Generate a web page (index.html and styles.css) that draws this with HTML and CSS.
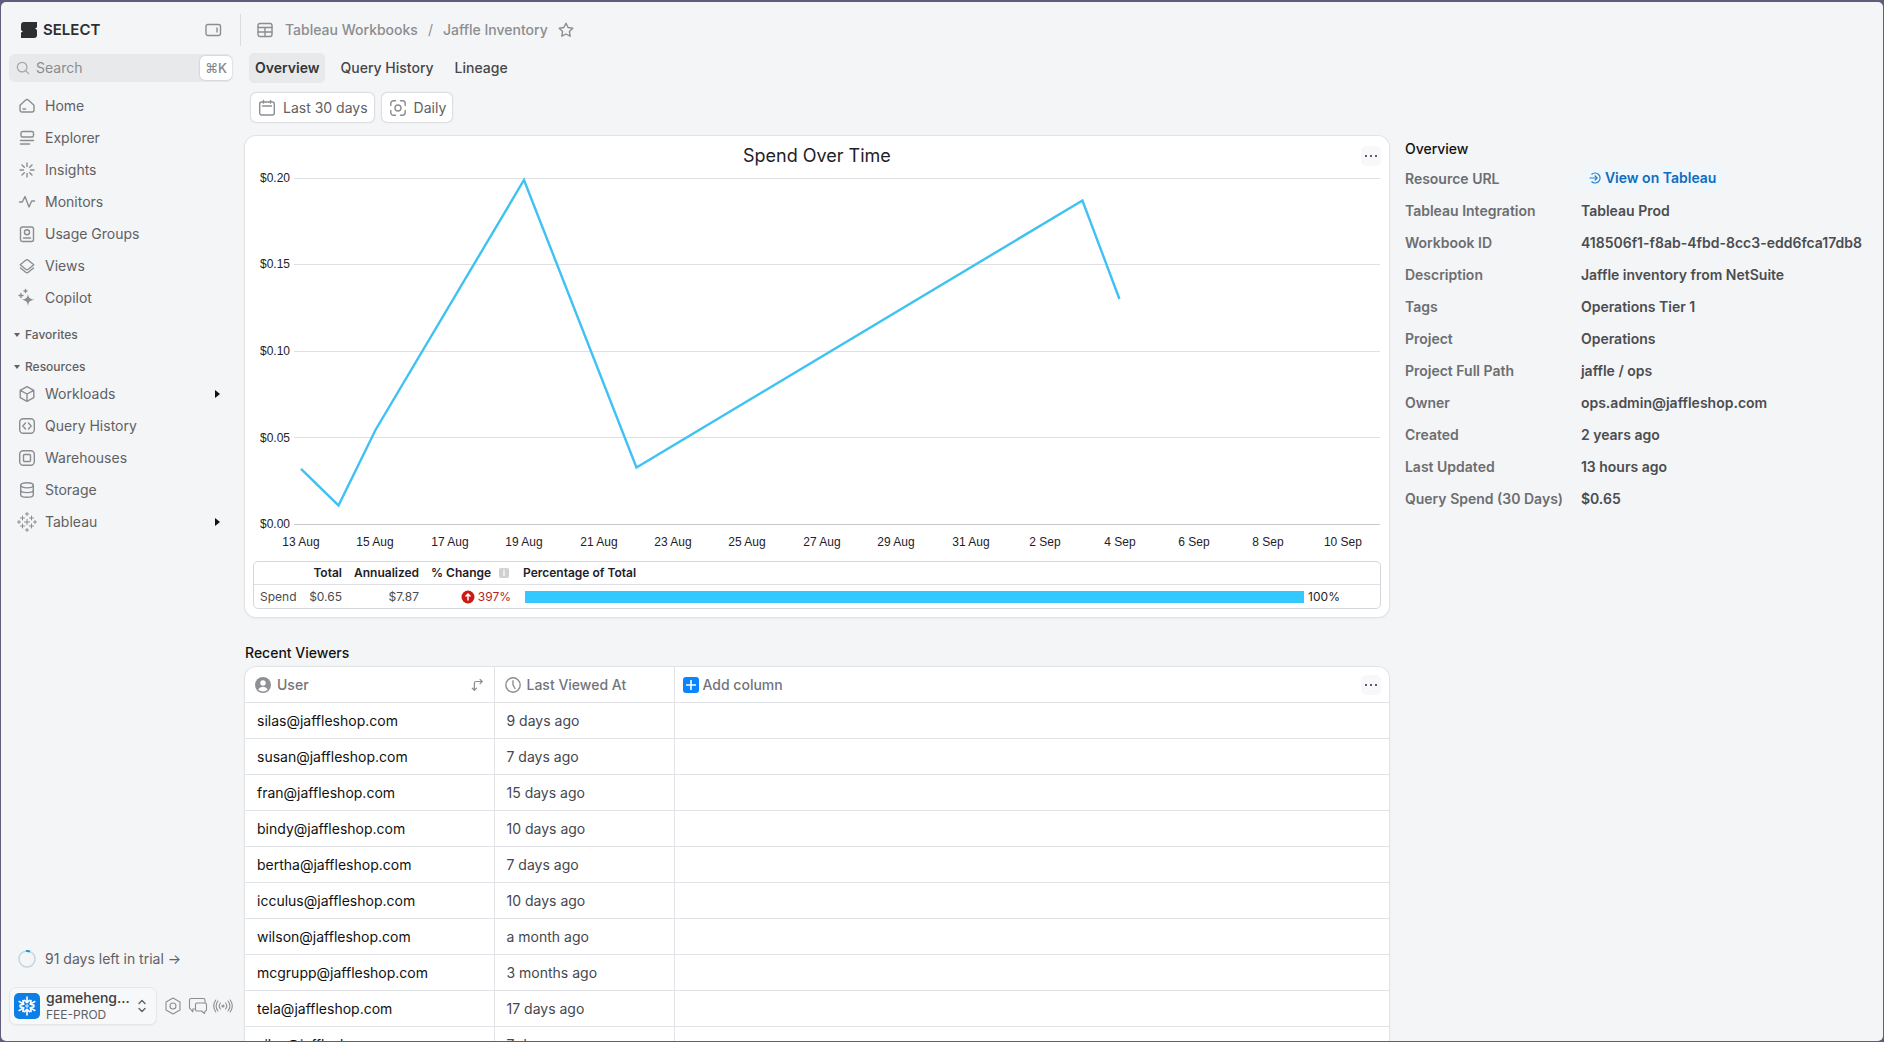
FILE: index.html
```html
<!DOCTYPE html>
<html lang="en">
<head>
    <meta charset="UTF-8">
    <meta name="viewport" content="width=device-width, initial-scale=1.0">
    <title>Jaffle Inventory - SELECT</title>
    <link rel="stylesheet" href="styles.css">
</head>
<body>
    <div class="window">
        <aside class="sidebar">
            <div class="brand">
                <svg class="brand-logo" viewBox="0 0 16 16"><path d="M3 0h13v4.500c0 1-.5 1.500-2 2 1.500.5 2 1.500 2 2.500v4a3 3 0 0 1-3 3H0v-4.500c0-1 .5-1.500 2-2-1.500-.5-2-1.500-2-2.500V3a3 3 0 0 1 3-3z" fill="#2e2f31"/></svg>
                <span class="brand-name">SELECT</span>
                <button class="icon-btn" aria-label="Collapse sidebar">
                    <svg class="icon" viewBox="0 0 16 16"><rect x="1" y="2.500" width="14.500" height="11" rx="2"/><path d="M12 6v4"/></svg>
                </button>
            </div>

            <div class="search">
                <svg class="icon" viewBox="0 0 16 16"><circle cx="7" cy="7" r="5.500"/><path d="M11 11l3.500 3.500"/></svg>
                <input type="text" placeholder="Search" aria-label="Search">
                <kbd>⌘K</kbd>
            </div>

            <nav class="nav">
                <a href="#"><svg class="icon" viewBox="0 0 16 16"><path d="M1 7.200 6.700 2a2 2 0 0 1 2.600 0L15 7.200V12a2 2 0 0 1-2 2H3a2 2 0 0 1-2-2zM4 11h2.500"/></svg>Home</a>
                <a href="#"><svg class="icon" viewBox="0 0 16 16"><rect x="2" y="1.500" width="12.500" height="5.500" rx="1.500"/><path d="M1.500 10.500h13M1.500 14h9"/></svg>Explorer</a>
                <a href="#"><svg class="icon" viewBox="0 0 16 16"><path d="M8 1v3.500M8 11.500V15M1 8h3.500M11.500 8H15M3 3l2.300 2.300M10.700 10.700 13 13M3 13l2.300-2.300M10.700 5.300 13 3"/></svg>Insights</a>
                <a href="#"><svg class="icon" viewBox="0 0 16 16"><path d="M.5 8h2.800L6 2.500l4 10.500L12.700 7h2.800"/></svg>Monitors</a>
                <a href="#"><svg class="icon" viewBox="0 0 16 16"><rect x="1.500" y="1" width="13" height="14.500" rx="2"/><circle cx="8" cy="6.300" r="2.500"/><path d="M4.500 12h7"/></svg>Usage Groups</a>
                <a href="#"><svg class="icon" viewBox="0 0 16 16"><path d="M1.200 6.800 6.700 2.300a2 2 0 0 1 2.600 0l5.500 4.500-5.500 4.500a2 2 0 0 1-2.600 0zM1.500 10l5.200 4.200a2 2 0 0 0 2.600 0l5.200-4.200"/></svg>Views</a>
                <a href="#"><svg class="icon" viewBox="0 0 16 16"><path class="solid" d="M9 4c.7 3.800 1.500 4.900 6.500 5.700-5 .8-5.800 1.900-6.500 6.300-.7-4.400-1.500-5.500-6.500-6.300C7.500 8.900 8.300 7.800 9 4z"/><path d="M2 3.500v4M0 5.500h4M6.500-.5v3M5 1h3"/></svg>Copilot</a>
            </nav>

            <div class="nav-group">Favorites</div>
            <div class="nav-group">Resources</div>

            <nav class="nav">
                <a href="#"><svg class="icon" viewBox="0 0 16 16"><path d="M8 .7 14.800 4.300v7.400L8 15.300 1.200 11.700V4.300zM1.200 4.300 8 8l6.800-3.700M8 8v7.300"/></svg>Workloads<span class="expand"></span></a>
                <a href="#"><svg class="icon" viewBox="0 0 16 16"><rect x=".7" y=".7" width="14.600" height="14.600" rx="3.500"/><path d="M6.500 5 3.800 8l2.700 3M9.500 5l2.700 3-2.700 3"/></svg>Query History</a>
                <a href="#"><svg class="icon" viewBox="0 0 16 16"><rect x=".7" y=".7" width="14.600" height="14.600" rx="3.500"/><rect x="4.500" y="4.500" width="7" height="7" rx="1"/></svg>Warehouses</a>
                <a href="#"><svg class="icon" viewBox="0 0 16 16"><ellipse cx="8" cy="3.300" rx="6.300" ry="2.600"/><path d="M1.700 3.300v9.400c0 1.500 2.800 2.600 6.300 2.600s6.300-1.100 6.300-2.600V3.300M1.700 8c0 1.500 2.800 2.600 6.300 2.600s6.300-1.100 6.300-2.600"/></svg>Storage</a>
                <a href="#"><svg class="icon thin" viewBox="0 0 16 16"><path d="M8 5.500v5M5.500 8h5M3.500 2v4M1.500 4h4M12.500 2v4M10.500 4h4M3.500 10v4M1.500 12h4M12.500 10v4M10.500 12h4M8-1.500v3M6.500 0h3M8 14.500v3M6.500 16h3M0 6.500v3M-1.500 8h3M16 6.500v3M14.500 8h3"/></svg>Tableau<span class="expand"></span></a>
            </nav>

            <div class="sidebar-bottom">
                <a class="trial" href="#">
                    <svg class="ring" viewBox="0 0 18 18"><circle cx="9" cy="9" r="8" stroke="#c3d3e0"/><path d="M8 1a8 8 0 0 1 4 .6" stroke="#1a9be0" stroke-width="2"/></svg>
                    91 days left in trial →
                </a>
                <div class="account-bar">
                    <button class="account">
                        <svg class="account-logo" viewBox="0 0 26 26"><rect width="26" height="26" rx="5" fill="#0b7fe6"/><path d="M13 4v5.500M10.500 7.300 13 9.700l2.500-2.400M13 22v-5.500M10.500 18.700l2.500-2.400 2.500 2.400M5.200 8.500l4.500 2.600M6 12.200l3.700-1.100-.8-3.600M20.800 8.500l-4.500 2.600M20 12.200l-3.700-1.100.8-3.600M5.200 17.500l4.500-2.600M6 13.800l3.700 1.100-.8 3.600M20.800 17.500l-4.500-2.600M20 13.800l-3.700 1.100.8 3.600" fill="none" stroke="#fff" stroke-width="1.600" stroke-linecap="round"/><circle cx="13" cy="13" r="1.200" fill="none" stroke="#fff"/></svg>
                        <span class="account-text">
                            <span class="account-name">gameheng...</span>
                            <span class="account-env">FEE-PROD</span>
                        </span>
                        <svg class="icon dark" viewBox="0 0 16 16"><path d="M5 5.500 8 2.500l3 3M5 10.500l3 3 3-3"/></svg>
                    </button>
                    <button class="icon-btn" aria-label="Settings"><svg class="icon large" viewBox="0 0 18 18"><path d="M9 1 16 5v8l-7 4-7-4V5z"/><circle cx="9" cy="9" r="3"/></svg></button>
                    <button class="icon-btn" aria-label="Feedback"><svg class="icon large" viewBox="0 0 18 18"><path d="M5.500 12H3.800v2.800L1.500 12A1.500 1.500 0 0 1 .5 10.500V3A1.500 1.500 0 0 1 2 1.500h12.500A1.500 1.500 0 0 1 16 3v2M8 6h8a1.500 1.500 0 0 1 1.500 1.500v5A1.500 1.500 0 0 1 16 14l-.500 2.500L12.500 14H8a1.500 1.500 0 0 1-1.500-1.500v-5A1.500 1.500 0 0 1 8 6z"/></svg></button>
                    <button class="icon-btn" aria-label="Status"><svg class="icon large" viewBox="0 0 18 18"><circle cx="9" cy="9" r="1"/><path d="M6.500 6a4.500 4.500 0 0 0 0 6M4 4a7.500 7.500 0 0 0 0 10M1.800 3a10.500 10.500 0 0 0 0 12M11.500 6a4.500 4.500 0 0 1 0 6M14 4a7.500 7.500 0 0 1 0 10M16.200 3a10.500 10.500 0 0 1 0 12"/></svg></button>
                </div>
            </div>
        </aside>

        <main class="main">
            <header class="topbar">
                <svg class="icon" viewBox="0 0 16 16"><rect x="1" y="1.500" width="14" height="13" rx="2"/><path d="M1 5.500h14M1 10h14M8 5.500v9"/></svg>
                <a href="#">Tableau Workbooks</a>
                <span class="slash">/</span>
                <a href="#">Jaffle Inventory</a>
                <button class="icon-btn" aria-label="Add to favorites"><svg class="icon" viewBox="0 0 16 16"><path d="M8 1.200l2.100 4.300 4.700.7-3.400 3.300.8 4.700L8 12l-4.200 2.200.8-4.700L1.200 6.200l4.700-.7z"/></svg></button>
            </header>

            <nav class="tabs">
                <a class="tab active" href="#">Overview</a>
                <a class="tab" href="#">Query History</a>
                <a class="tab" href="#">Lineage</a>
            </nav>

            <div class="filters">
                <button class="filter"><svg class="icon" viewBox="0 0 16 16"><rect x=".7" y="2" width="14.600" height="13" rx="2"/><path d="M4.500.5V3M11.500.5V3M3.500 6h9"/></svg>Last 30 days</button>
                <button class="filter"><svg class="icon" viewBox="0 0 16 16"><circle cx="8" cy="8" r="3"/><path d="M.8 5.500V3.500A2.700 2.700 0 0 1 3.500.8h2M10.500.8h2a2.700 2.700 0 0 1 2.700 2.700v2M15.200 10.500v2a2.700 2.700 0 0 1-2.700 2.700h-2M5.500 15.200h-2a2.700 2.700 0 0 1-2.700-2.700v-2"/></svg>Daily</button>
            </div>

            <div class="columns">
                <div class="content">
                    <section class="card chart-card">
                        <button class="more card-more" aria-label="Chart options"><svg viewBox="0 0 20 20"><path d="M4 9h2v2H4zM9 9h2v2H9zM14 9h2v2h-2z"/></svg></button>
                        <svg class="chart" viewBox="0 0 1144 417">
                            <text class="chart-title" x="572" y="26">Spend Over Time</text>
                            <path class="grid" d="M49 42.500h1086M49 128.500h1086M49 215.500h1086M49 301.500h1086"/>
                            <path class="axis" d="M49 388.500h1086"/>
                            <g class="y-labels">
                                <text x="45" y="46">$0.20</text>
                                <text x="45" y="132">$0.15</text>
                                <text x="45" y="219">$0.10</text>
                                <text x="45" y="306">$0.05</text>
                                <text x="45" y="392">$0.00</text>
                            </g>
                            <g class="x-labels">
                                <text x="56" y="410">13 Aug</text>
                                <text x="130" y="410">15 Aug</text>
                                <text x="205" y="410">17 Aug</text>
                                <text x="279" y="410">19 Aug</text>
                                <text x="354" y="410">21 Aug</text>
                                <text x="428" y="410">23 Aug</text>
                                <text x="502" y="410">25 Aug</text>
                                <text x="577" y="410">27 Aug</text>
                                <text x="651" y="410">29 Aug</text>
                                <text x="726" y="410">31 Aug</text>
                                <text x="800" y="410">2 Sep</text>
                                <text x="875" y="410">4 Sep</text>
                                <text x="949" y="410">6 Sep</text>
                                <text x="1023" y="410">8 Sep</text>
                                <text x="1098" y="410">10 Sep</text>
                            </g>
                            <polyline class="line" points="56,333 93.500,369.500 130.500,294 279,44 391.500,331.500 837.500,64.500 874.500,163"/>
                        </svg>
                        <div class="summary">
                            <table>
                                <colgroup><col class="c-name"><col class="c-total"><col class="c-year"><col class="c-change"><col></colgroup>
                                <thead>
                                    <tr>
                                        <th></th>
                                        <th class="num">Total</th>
                                        <th class="num">Annualized</th>
                                        <th><span class="change-head">% Change <span class="info">i</span></span></th>
                                        <th class="pct">Percentage of Total</th>
                                    </tr>
                                </thead>
                                <tbody>
                                    <tr>
                                        <td>Spend</td>
                                        <td class="num">$0.65</td>
                                        <td class="num">$7.87</td>
                                        <td><span class="change"><svg viewBox="0 0 14 14"><circle cx="7" cy="7" r="6.500" fill="#cb1a14"/><path d="M7 10.500v-6M4.500 6.500 7 4l2.500 2.500" fill="none" stroke="#fff" stroke-width="1.500"/></svg>397%</span></td>
                                        <td class="pct"><span class="bar-cell"><span class="track"><span class="bar" style="width: 100%"></span></span>100%</span></td>
                                    </tr>
                                </tbody>
                            </table>
                        </div>
                    </section>

                    <h2 class="section-title">Recent Viewers</h2>
                    <div class="card viewers">
                        <table>
                            <colgroup><col class="c-user"><col class="c-viewed"><col></colgroup>
                            <thead>
                                <tr>
                                    <th><div class="head"><svg class="head-icon" viewBox="0 0 16 16"><circle cx="8" cy="8" r="8" fill="#8f9093"/><circle cx="8" cy="6" r="2.700" fill="#fff"/><path d="M3.200 12.500a5.500 5.500 0 0 1 9.600 0 6.500 6.500 0 0 1-9.600 0z" fill="#fff"/></svg>User<svg class="icon sort" viewBox="0 0 16 16"><path d="M5 14V6a2 2 0 0 1 2-2h7M11.500 1.500 14 4l-2.500 2.500M2.500 11.500 5 14l2.500-2.500"/></svg></div></th>
                                    <th><div class="head"><svg class="icon head-icon" viewBox="0 0 16 16"><circle cx="8" cy="8" r="7.200"/><path d="M8 3.800V8l2 3.500"/></svg>Last Viewed At</div></th>
                                    <th><div class="head"><button class="add"><svg class="head-icon" viewBox="0 0 16 16"><rect width="16" height="16" rx="3" fill="#0a84ff"/><path d="M8 3v10M3 8h10" stroke="#fff" stroke-width="1.600"/></svg>Add column</button><button class="more" aria-label="Table options"><svg viewBox="0 0 20 20"><path d="M4 9h2v2H4zM9 9h2v2H9zM14 9h2v2h-2z"/></svg></button></div></th>
                                </tr>
                            </thead>
                            <tbody>
                                <tr><td>silas@jaffleshop.com</td><td>9 days ago</td><td></td></tr>
                                <tr><td>susan@jaffleshop.com</td><td>7 days ago</td><td></td></tr>
                                <tr><td>fran@jaffleshop.com</td><td>15 days ago</td><td></td></tr>
                                <tr><td>bindy@jaffleshop.com</td><td>10 days ago</td><td></td></tr>
                                <tr><td>bertha@jaffleshop.com</td><td>7 days ago</td><td></td></tr>
                                <tr><td>icculus@jaffleshop.com</td><td>10 days ago</td><td></td></tr>
                                <tr><td>wilson@jaffleshop.com</td><td>a month ago</td><td></td></tr>
                                <tr><td>mcgrupp@jaffleshop.com</td><td>3 months ago</td><td></td></tr>
                                <tr><td>tela@jaffleshop.com</td><td>17 days ago</td><td></td></tr>
                                <tr><td>silas@jaffleshop.com</td><td>7 days ago</td><td></td></tr>
                            </tbody>
                        </table>
                    </div>
                </div>

                <aside class="details">
                    <h2>Overview</h2>
                    <dl>
                        <dt>Resource URL</dt>
                        <dd><a class="view-link" href="#"><svg viewBox="0 0 12 12"><path d="M2.500 2.500a5 5 0 1 1 0 7M.5 6H8M5.700 3.500 8.200 6 5.700 8.500"/></svg>View on Tableau</a></dd>
                        <dt>Tableau Integration</dt>
                        <dd>Tableau Prod</dd>
                        <dt>Workbook ID</dt>
                        <dd>418506f1-f8ab-4fbd-8cc3-edd6fca17db8</dd>
                        <dt>Description</dt>
                        <dd>Jaffle inventory from NetSuite</dd>
                        <dt>Tags</dt>
                        <dd>Operations Tier 1</dd>
                        <dt>Project</dt>
                        <dd>Operations</dd>
                        <dt>Project Full Path</dt>
                        <dd>jaffle / ops</dd>
                        <dt>Owner</dt>
                        <dd>ops.admin@jaffleshop.com</dd>
                        <dt>Created</dt>
                        <dd>2 years ago</dd>
                        <dt>Last Updated</dt>
                        <dd>13 hours ago</dd>
                        <dt>Query Spend (30 Days)</dt>
                        <dd>$0.65</dd>
                    </dl>
                </aside>
            </div>
        </main>
    </div>
</body>
</html>
```
FILE: styles.css
```css
* {
    margin: 0;
    padding: 0;
    box-sizing: border-box;
}

body {
    height: 100vh;
    padding: 2px 1px 1px;
    background: #625c7c;
    font-family: Inter, "Liberation Sans", sans-serif;
    font-size: 14px;
    line-height: 20px;
    color: #5f6164;
    overflow: hidden;
}

a {
    color: inherit;
    text-decoration: none;
}

button {
    font: inherit;
    color: inherit;
    background: none;
    border: none;
    cursor: pointer;
}

.window {
    display: flex;
    height: 100%;
    background: #f4f5f7;
    border-radius: 5px;
    overflow: hidden;
}

.icon {
    width: 16px;
    height: 16px;
    flex-shrink: 0;
    fill: none;
    stroke: #8b8d90;
    stroke-width: 1.4;
    stroke-linecap: round;
    stroke-linejoin: round;
    overflow: visible;
}

.icon .solid {
    fill: #8b8d90;
    stroke: none;
}

.icon.thin {
    stroke-width: 1;
}

.icon.large {
    width: 18px;
    height: 18px;
    stroke-width: 1.1;
}

.icon.dark {
    stroke: #5f6164;
}

.icon-btn {
    display: flex;
    align-items: center;
}

/* sidebar */
.sidebar {
    display: flex;
    flex-direction: column;
    width: 239px;
    flex-shrink: 0;
    padding: 12px 8px 16px 8px;
}

.brand {
    display: flex;
    align-items: center;
    height: 32px;
    padding: 0 11px 0 12px;
}

.brand-logo {
    width: 16px;
    height: 16px;
    margin-right: 6px;
}

.brand-name {
    font-size: 15px;
    font-weight: 600;
    color: #2e2f31;
}

.brand .icon-btn {
    margin-left: auto;
}

.search {
    display: flex;
    align-items: center;
    height: 28px;
    margin: 8px 0;
    padding-left: 7px;
    background: #e8e9ea;
    border-radius: 6px;
}

.search .icon {
    width: 14px;
    height: 14px;
    stroke: #a4a6a8;
}

.search input {
    flex: 1;
    min-width: 0;
    margin-left: 6px;
    font: inherit;
    background: none;
    border: none;
    outline: none;
}

.search input::placeholder {
    color: #8b8d90;
}

kbd {
    height: 24px;
    padding: 2px 5px;
    font: inherit;
    font-size: 13px;
    font-weight: 500;
    color: #85878a;
    background: #fff;
    border-radius: 5px;
    box-shadow: 0 0 2px rgba(0, 0, 0, 0.25);
}

.nav a {
    display: flex;
    align-items: center;
    gap: 10px;
    height: 32px;
    padding: 0 12px 0 10px;
}

.expand {
    margin-left: auto;
    border-left: 5px solid #111;
    border-top: 4px solid transparent;
    border-bottom: 4px solid transparent;
}

.nav-group {
    display: flex;
    align-items: center;
    gap: 5px;
    height: 20px;
    margin-top: 11px;
    padding-left: 5px;
    font-size: 12px;
    font-weight: 500;
}

.nav-group + .nav-group {
    margin: 12px 0 1px;
}

.nav-group::before {
    content: "";
    border-top: 4px solid #5f6164;
    border-left: 3px solid transparent;
    border-right: 3px solid transparent;
}

.sidebar-bottom {
    margin-top: auto;
}

.trial {
    display: flex;
    align-items: center;
    gap: 9px;
    height: 32px;
    padding-left: 9px;
    margin-bottom: 12px;
}

.ring {
    width: 18px;
    height: 18px;
    fill: none;
    stroke-width: 1.4;
}

.account-bar {
    display: flex;
    align-items: center;
    gap: 7px;
}

.account {
    display: flex;
    align-items: center;
    flex: 1;
    height: 38px;
    padding: 0 6px 0 4px;
    border: 1px solid #e6e7e9;
    border-radius: 7px;
    background: #f7f8f9;
    text-align: left;
    box-shadow: 0 1px 1px rgba(0, 0, 0, 0.04);
}

.account-logo {
    width: 26px;
    height: 26px;
    margin-right: 6px;
    flex-shrink: 0;
}

.account-text {
    display: flex;
    flex-direction: column;
    flex: 1;
}

.account-name {
    font-weight: 500;
    line-height: 18px;
    color: #3c3e41;
}

.account-env {
    font-size: 12px;
    line-height: 16px;
}

/* main area */
.main {
    flex: 1;
    min-width: 0;
    padding-top: 12px;
    padding-right: 21px;
}

.topbar {
    display: flex;
    align-items: center;
    height: 32px;
    padding-left: 16px;
    border-left: 1px solid #dcdddf;
    font-weight: 500;
    color: #8b8d90;
}

.topbar .icon {
    margin-right: 12px;
}

.topbar .slash {
    padding: 0 10px;
    font-weight: 400;
}

.topbar .icon-btn {
    margin-left: 10px;
}

.tabs {
    display: flex;
    gap: 9px;
    margin: 7px 0 10px 9px;
}

.tab {
    padding: 5px 6px;
    font-weight: 500;
    color: #45474a;
    border-radius: 5px;
}

.tab.active {
    font-weight: 600;
    color: #333537;
    background: #e8e9ea;
}

.filters {
    display: flex;
    gap: 8px;
    margin: 0 0 14px 11px;
}

.filter {
    display: flex;
    align-items: center;
    gap: 8px;
    height: 29px;
    padding: 0 6px 0 8px;
    background: #fff;
    border-radius: 5px;
    box-shadow: 0 0 2px rgba(0, 0, 0, 0.35);
}

.columns {
    display: flex;
    align-items: flex-start;
    gap: 16px;
    padding-left: 5px;
}

.content {
    flex: 1;
    min-width: 0;
}

.card {
    background: #fff;
    border-radius: 11px;
    box-shadow: 0 0 0 1px #e2e3e5, 0 1px 3px rgba(0, 0, 0, 0.08);
}

.chart-card {
    position: relative;
    padding-bottom: 8px;
}

.more {
    width: 20px;
    height: 20px;
    background: #f8f8fa;
    border-radius: 5px;
}

.more svg {
    display: block;
    width: 20px;
    height: 20px;
    fill: #5b5e72;
}

.card-more {
    position: absolute;
    top: 10px;
    right: 8px;
}

.chart {
    display: block;
    width: 100%;
    height: auto;
    margin-bottom: 8px;
    font-family: "Liberation Sans", Arial, sans-serif;
    font-size: 12px;
    fill: #1f2128;
}

.chart-title {
    font-family: Inter, sans-serif;
    font-size: 18px;
    text-anchor: middle;
}

.grid {
    stroke: #dfe0e4;
}

.axis {
    stroke: #c6c8cc;
}

.y-labels {
    text-anchor: end;
}

.x-labels {
    text-anchor: middle;
}

.line {
    fill: none;
    stroke: #3fc1f3;
    stroke-width: 2.4;
}

.summary {
    margin: 0 8px;
    border: 1px solid #d6d7da;
    border-radius: 5px;
    font-size: 12px;
}

.summary table,
.viewers table {
    width: 100%;
    border-collapse: collapse;
    table-layout: fixed;
}

.summary th,
.summary td {
    height: 23px;
    padding: 0 6px;
    line-height: 16px;
    text-align: left;
    color: #4a4c52;
}

.summary th {
    font-weight: 600;
    color: #1f2128;
    border-bottom: 1px solid #dfe0e4;
}

.summary .num {
    text-align: right;
}

.c-name {
    width: 47px;
}

.c-total {
    width: 47px;
}

.c-year {
    width: 77px;
}

.c-change {
    width: 92px;
}

.change-head,
.change,
.bar-cell {
    display: flex;
    align-items: center;
}

.change-head {
    justify-content: space-between;
    padding-right: 2px;
    white-space: nowrap;
}

.info {
    width: 10px;
    height: 10px;
    font-size: 9px;
    line-height: 10px;
    text-align: center;
    color: #fff;
    background: #cfd0d3;
    border-radius: 2px;
}

.change {
    justify-content: flex-end;
    gap: 3px;
    color: #b3261e;
}

.change svg {
    width: 14px;
    height: 14px;
}

.track {
    flex: 1;
}

.bar {
    display: block;
    height: 12px;
    background: #33c8ff;
}

.bar-cell {
    gap: 4px;
    padding: 0 34px 0 2px;
    color: #1f2128;
}

.section-title {
    margin: 26px 0 4px;
    font-size: 14px;
    font-weight: 500;
    color: #111;
}

.viewers {
    overflow: hidden;
}

.c-user {
    width: 249px;
}

.c-viewed {
    width: 180px;
}

.viewers th,
.viewers td {
    height: 36px;
    padding: 0 12px;
    text-align: left;
    color: #45474f;
    border-bottom: 1px solid #e2e3e6;
    border-right: 1px solid #e2e3e6;
}

.viewers th:last-child,
.viewers td:last-child {
    border-right: none;
}

.viewers td:first-child {
    color: #111;
}

.viewers th {
    padding: 0 8px 0 10px;
    font-weight: 500;
    color: #72747c;
}

.viewers th:last-child {
    padding-left: 8px;
}

.head {
    display: flex;
    align-items: center;
}

.head-icon {
    width: 16px;
    height: 16px;
    margin-right: 6px;
}

.sort {
    width: 14px;
    height: 14px;
    margin-left: auto;
    margin-right: 2px;
}

.add {
    display: flex;
    align-items: center;
    font-weight: 500;
}

.add .head-icon {
    margin-right: 4px;
}

.head .more {
    margin-left: auto;
}

.details {
    padding-top: 3px;
    font-weight: 600;
}

.details h2 {
    margin-bottom: 4px;
    font-size: 14px;
    font-weight: 500;
    color: #111;
}

.details dl {
    display: grid;
    grid-template-columns: 176px auto;
    line-height: 32px;
}

.details dt {
    color: #6c6e71;
}

.details dd {
    color: #4b4d50;
    white-space: nowrap;
}

.view-link {
    display: inline-flex;
    align-items: center;
    gap: 4px;
    padding: 0 8px;
    line-height: 24px;
    font-weight: 600;
    color: #0f6cbd;
    background: #eff6fc;
    border-radius: 5px;
}

.view-link svg {
    width: 12px;
    height: 12px;
    fill: none;
    stroke: #2b83d0;
    stroke-width: 1.2;
}
```
